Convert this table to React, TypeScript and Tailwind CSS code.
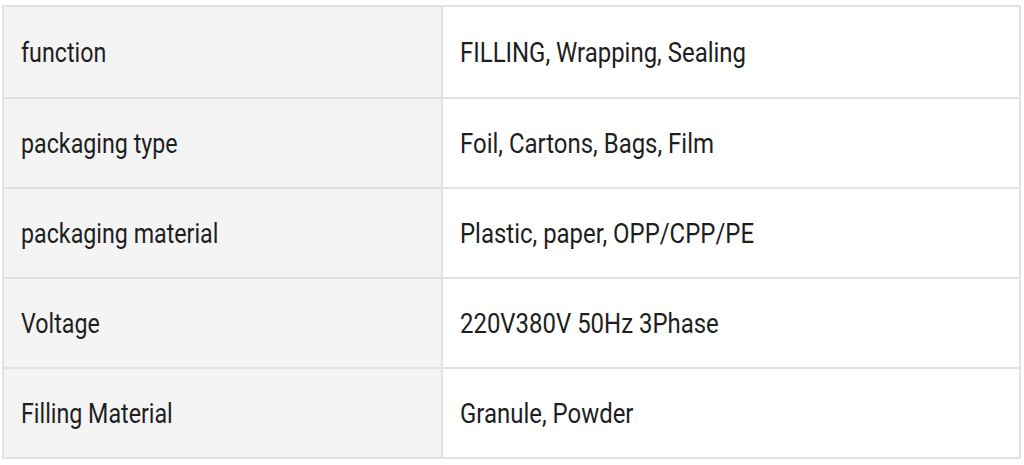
const rows = [
  ['function', 'FILLING, Wrapping, Sealing'],
  ['packaging type', 'Foil, Cartons, Bags, Film'],
  ['packaging material', 'Plastic, paper, OPP/CPP/PE'],
  ['Voltage', '220V380V 50Hz 3Phase'],
  ['Filling Material', 'Granule, Powder'],
];

export default function App() {
  return (
    <div className="w-[1024px] h-[465px] bg-white pl-[2px] pt-[5px] font-['Roboto',sans-serif] text-[#1e1e1e]">
      <div className="w-[1019px] border-2 border-[#e2e2e2]">
        {rows.map(([label, value], i) => (
          <div
            key={label}
            className={`grid grid-cols-[439px_1fr] h-[90px] ${i > 0 ? 'border-t-2 border-[#e2e2e2]' : ''}`}
          >
            <div className="flex items-center bg-[#f4f4f4] border-r-2 border-[#e2e2e2] pl-[17px] pt-[2px]">
              <span className="inline-block text-[28px] origin-left scale-x-[0.83] whitespace-nowrap">{label}</span>
            </div>
            <div className="flex items-center pl-[17px] pt-[2px]">
              <span className="inline-block text-[28px] origin-left scale-x-[0.855] whitespace-nowrap">{value}</span>
            </div>
          </div>
        ))}
      </div>
    </div>
  );
}
